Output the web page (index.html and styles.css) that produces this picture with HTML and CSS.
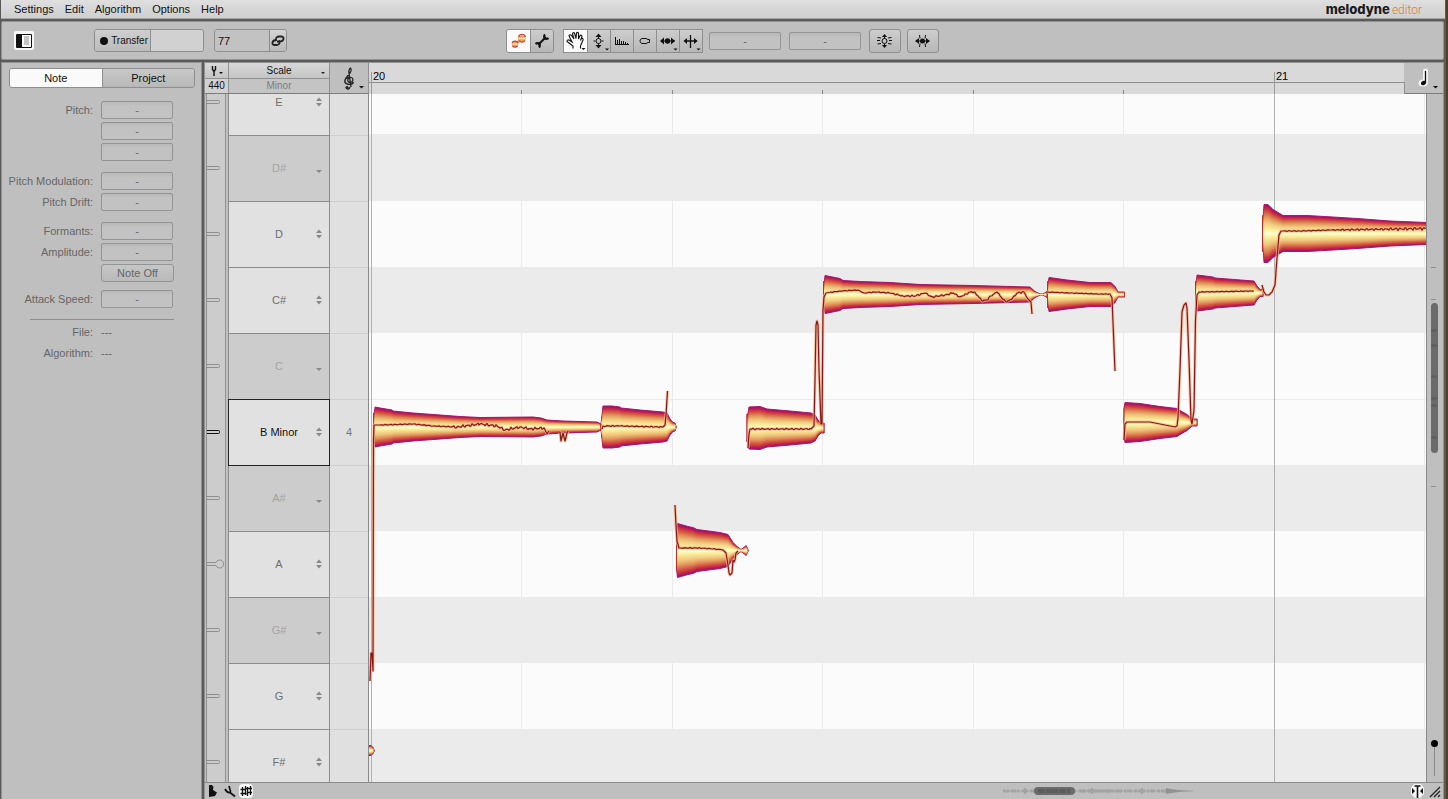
FILE: index.html
```html
<!DOCTYPE html>
<html lang="en">
<head>
<meta charset="utf-8">
<title>Melodyne editor</title>
<link rel="stylesheet" href="styles.css">
</head>
<body>
<div class="app">
  <header class="menubar">
    <nav class="menus">
      <button>Settings</button><button>Edit</button><button>Algorithm</button><button>Options</button><button>Help</button>
    </nav>
    <div class="logo"><b>melodyne</b><span>editor</span></div>
  </header>

  <section class="toolbar">
    <div class="tools-left">
      <button class="panel-toggle" aria-label="Toggle panel"><svg width="20" height="19"><rect width="20" height="19" rx="2" fill="#f6f6f6"/><path d="M2.500 3.500h15v13h-15z" fill="#fff" stroke="#111"/><path d="M3 4h5v12h-5z" fill="#111"/><path d="M10 5h5v9h-5z" fill="#c4c4c4"/></svg></button>
      <div class="transfer"><button><i class="dot"></i>Transfer</button><span></span></div>
      <div class="tempo"><input aria-label="Tempo" value="77"><button aria-label="Link tempo"><svg width="14" height="12" fill="none" stroke="#222" stroke-width="1.800"><path d="M5 6q-1-4 3-4.500h2q3 0 2.500 2.500T8 6.500H6"/><path d="M8 5.500q2 3.500-2 4.500H4q-3 0-2.500-2.500T5.500 5"/></svg></button></div>
    </div>
    <div class="tools-center">
      <div class="group round">
        <button class="on" aria-label="Notes"><svg width="18" height="18"><path d="M6 12l6-6" stroke="#e39a86" stroke-width="3"/><circle cx="5" cy="12" r="3.200" fill="#e9a257"/><circle cx="12" cy="6.500" r="3.600" fill="#e9a257"/><path d="M2 11a3.300 3.300 0 0 1 6 0M2.500 14a3.300 3.300 0 0 0 5 0M8.500 5a3.600 3.600 0 0 1 7 0M9 8.500a3.600 3.600 0 0 0 6 0" fill="none" stroke="#cf3d35" stroke-width="1.200"/><path d="M2.500 12h5M9 6.500h6" stroke="#ffeaa0" stroke-width="1.500"/></svg></button>
        <button aria-label="Adjust"><svg width="18" height="18" fill="none" stroke="#111"><path d="M5 13l8-8" stroke-width="2"/><path d="M12 2.500Q10.500 4 11.500 6.500 14 7.500 15.500 6M2.500 12Q4 10.500 6.500 11.500 7.500 14 6 15.500" stroke-width="2"/></svg></button>
      </div>
      <div class="group square">
        <button class="on" aria-label="Main tool"><svg width="21" height="21" fill="none" stroke="#111" stroke-width="1.100"><path d="M8 18.500V16L4 13 2 11.500Q2 9.500 4 10L7 12 5 8 4 5.500Q5 4 6.500 5.500L9 9 7.500 4Q8 2 9.500 3L11 8.500 11.500 3Q13 1.500 13.500 3.500V9L15 5.500Q16.500 4.500 17 6.500L15.500 10.500 16.500 8.500Q18.500 8 18 10L15.500 16v2.500"/><path d="M16.500 18h4l-2 2z" fill="#111" stroke="none"/></svg></button>
        <button aria-label="Pitch tool"><svg width="20" height="20"><path d="M9.500 4v3.500M9.500 12.500V16M4.500 10h2M12.500 10h2" stroke="#111"/><path d="M9.500 2.500l3 3.500h-6zM9.500 17.500l3-3.500h-6z" fill="#111"/><circle cx="9.500" cy="10" r="2.500" fill="none" stroke="#111"/><path d="M16 17.500h4l-2 2z" fill="#111"/></svg></button>
        <button aria-label="Formant tool"><svg width="20" height="20" stroke="#111" fill="none"><path d="M3.500 6v8M3 13.500h14M5.500 9v4M7.500 8v5M9.500 10v3M11.500 10v3M13.500 11v2M15.500 12v1"/></svg></button>
        <button aria-label="Amplitude tool"><svg width="20" height="20" stroke="#111" fill="none"><path d="M7 7.500h4l2 1h1.500v3H13l-2 1H7q-2-.5-2-2.500t2-2.500z"/></svg></button>
        <button aria-label="Timing tool"><svg width="20" height="20"><path d="M3 10h14" stroke="#111"/><path d="M2 10l4-3.500v7zM17 10l-4-3.500v7z" fill="#111"/><circle cx="9.500" cy="10" r="2.700" fill="#111"/><path d="M15.500 17.500h4l-2 2z" fill="#111"/></svg></button>
        <button aria-label="Note separation tool"><svg width="20" height="20"><path d="M9.500 4v13M4 10h12" stroke="#111" stroke-width="1.300"/><path d="M2.500 10L6 7v6zM16.500 10L13 7v6z" fill="#111"/><path d="M15.500 17.500h4l-2 2z" fill="#111"/></svg></button>
      </div>
      <input class="field wide" aria-label="Pitch value" value="-">
      <input class="field wide" aria-label="Cents value" value="-">
      <button class="macro" aria-label="Correct pitch"><svg width="20" height="18" fill="none" stroke="#111"><path d="M9.500 3v3.500M9.500 11.500V15M2.500 5.500l3.500.5M2 8.500h3M2.500 12l3.500-.5M16.500 5.500L13 6M14 8.500h3M16.500 12l-3.500-.5"/><circle cx="9.500" cy="9" r="2.500"/><path d="M9.500 2l2.500 3H7zM9.500 16l2.500-3H7z" fill="#111" stroke="none"/></svg></button>
      <button class="macro" aria-label="Quantize time"><svg width="20" height="18" fill="none" stroke="#111"><path d="M3 9h13M6.500 3l.5 3.500M6.500 15l.5-3.500M12.500 3l-.5 3.500M12.500 15l-.5-3.500"/><path d="M2 9l4-3v6zM17 9l-4-3v6z" fill="#111" stroke="none"/><circle cx="9.500" cy="9" r="2.500" fill="#111" stroke="none"/></svg></button>
    </div>
  </section>

  <main class="workspace">
    <aside class="inspector">
      <div class="tabs"><button class="on">Note</button><button>Project</button></div>
      <form class="props">
        <label for="p1">Pitch:</label><input id="p1" class="field" value="-">
        <input aria-label="Pitch cents" class="field lone" value="-">
        <input aria-label="Pitch frequency" class="field lone" value="-">
        <label class="gap" for="p2">Pitch Modulation:</label><input id="p2" class="field gap" value="-">
        <label for="p3">Pitch Drift:</label><input id="p3" class="field" value="-">
        <label class="gap" for="p4">Formants:</label><input id="p4" class="field gap" value="-">
        <label for="p5">Amplitude:</label><input id="p5" class="field" value="-">
        <button type="button" class="lone note-off">Note Off</button>
        <label class="gap-small" for="p6">Attack Speed:</label><input id="p6" class="field gap-small" value="-">
        <hr>
        <span class="key">File:</span><span>---</span>
        <span class="key">Algorithm:</span><span>---</span>
      </form>
    </aside>

    <section class="editor">
      <div class="editor-head">
        <div class="tuning">
          <button aria-label="Tuning"><svg width="14" height="12"><path d="M2.500 1v3.500L4 6.500 5.500 4.500V1M4 6v5" fill="none" stroke="#111" stroke-width="1.400"/><path d="M9 7h4l-2 2z" fill="#111"/></svg></button>
          <span>440</span>
        </div>
        <div class="scale">
          <button>Scale<i class="caret"></i></button>
          <span>Minor</span>
        </div>
        <button class="clef" aria-label="Clef"><svg width="30" height="28"><path d="M11.500 13c-2.500.5-2.500 4 .3 4.500s4.700-4 1.200-5-7 1.500-6 4.500 7.500 3.500 8.500 0M12 22q-1 3-3.500 1.500M13 22L11 8C10.500 4 12.500 2 13 4s-.5 4-3 6.500-4.500 5-2.500 8" fill="none" stroke="#222" stroke-width="1.300"/><circle cx="9" cy="22.500" r="1.600" fill="#222"/><path d="M21 21h5l-2.500 2.500z" fill="#111"/></svg></button>
        <svg class="ruler" width="100%" height="31"><path d="M0 19.500h2000" stroke="#909090"/><path d="M2.500 9v23M905.500 9v23" stroke="#999"/><path d="M152.500 27v4M303.500 27v4M453.500 27v4M604.500 27v4M754.500 27v4" stroke="#888"/><text x="4" y="17">20</text><text x="907" y="17">21</text></svg>
        <button class="snap" aria-label="Time grid"><svg width="39" height="31"><path d="M.5 19v12" stroke="#909090"/><path d="M21.500 8v11" stroke="#f6f6f6" stroke-width="5" stroke-linecap="round"/><ellipse cx="19" cy="20" rx="4.500" ry="3.500" fill="#f6f6f6"/><path d="M21.500 8v12" stroke="#111" stroke-width="1.300"/><ellipse cx="19.500" cy="20" rx="2.700" ry="2" fill="#111" transform="rotate(-20 19.500 20)"/><path d="M29 23h5l-2.500 2.500z" fill="#111"/></svg></button>
      </div>

      <div class="editor-body">
        <div class="keys" id="keys"></div>
        <svg class="canvas" id="canvas" width="100%" height="100%"></svg>
        <div class="vbar">
          <svg class="vscroll" width="16" height="400"><path d="M4 173.500h5M4 205.500h5M4 392.500h5" stroke="#8d8d8d"/><rect x="4" y="209" width="7" height="150" rx="3.500" fill="#6b6b6b"/><path d="M4 236.500h6M4 251.500h6M4 282.500h6M4 304.500h6M4 311.500h6M4 343.500h6" stroke="#5d5d5d" stroke-width="2"/></svg>
          <input class="vzoom" type="range" aria-label="Vertical zoom" min="0" max="100" value="0">
        </div>
      </div>

      <footer class="editor-foot">
        <svg width="60" height="16"><path d="M4 2h3l1.500 2-.5 3 4 2.500L10 13l-6 1z" fill="#111"/><path d="M20 6q2 4 5 3.500l5 4M24 3l1 3.500q1 1.500 0 3" fill="none" stroke="#111" stroke-width="1.700"/><rect x="34" y="1" width="14" height="14" rx="4" fill="#f6f6f6"/><path d="M37.500 4v9M40.500 3v9M42.500 4v9M45.500 3v9M35.500 6.500h5M41 5.500h6M35.500 10.500h6M42 9.500h5" stroke="#111" stroke-width="1.300" fill="none"/></svg>
        <svg class="overview" width="200" height="14"><g stroke="#a3a3a3"><path d="M2 7h108" stroke-width="3" stroke-dasharray="3 1 2 2 5 1 2 3"/><path d="M2 7h190"/><path d="M80 7h88" stroke-width="3" stroke-dasharray="5 2 3 1 7 2 2 1"/><path d="M24 4v6M91 4v6M141 4v6" stroke-width="2"/></g><path d="M165 4q8 2 26 3-18 1-26 3z" fill="#929292"/><rect x="33" y="3" width="41" height="8" rx="4" fill="#6b6b6b"/><path d="M37 7h32" stroke="#5c5c5c" stroke-width="4" stroke-dasharray="7 1 12 1"/></svg>
        <svg width="34" height="16"><path d="M2 5l3-4h7l3 4v6l-4 4H6l-4-4z" fill="#f6f6f6"/><path d="M8.500 3v12M5.500 3h6" stroke="#111" stroke-width="1.600"/><path d="M3 5l3 3-3 3zM14 5l-3 3 3 3z" fill="#111"/><path d="M21 14L31 4M25 14l6-6M29 14l2-2" stroke="#222" stroke-width="1.300"/></svg>
      </footer>
    </section>
  </main>
</div>
<script src="script.js"></script>
</body>
</html>
```

FILE: styles.css
```css
* { box-sizing: border-box; }
body {
  margin: 0;
  font: 11px/14px "Liberation Sans", Arial, sans-serif;
  color: #111;
  background: #4e4024;
}
button, input { font: inherit; color: inherit; margin: 0; padding: 0; border: 0; background: none; border-radius: 0; }
svg { display: block; }
.app {
  height: 100vh;
  margin-right: 2px;
  padding: 0 2px 0 1px;
  display: flex;
  flex-direction: column;
  background: #5a5a5a;
}

.menubar {
  flex: none;
  height: 19px;
  margin-right: -1px;
  padding: 0 23px 0 13px;
  display: flex;
  justify-content: space-between;
  align-items: center;
  background: linear-gradient(#dfdfdf, #cfcfcf);
  border-bottom: 1px solid #a5a5a5;
}
.menus { display: flex; gap: 11px; }
.logo { display: flex; align-items: baseline; gap: 2px; font-family: Inter, sans-serif; font-size: 12px; }
.logo b { font-size: 13px; font-weight: 800; color: #1c1c1c; }
.logo span { font-family: Roboto, sans-serif; font-weight: 300; color: #e07a35; }

.toolbar {
  flex: none;
  height: 39px;
  margin: 2px 0;
  padding: 0 12px;
  display: grid;
  grid-template-columns: 1fr auto 1fr;
  align-items: center;
  background: #bfbfbf;
  border: 1px solid #929292;
  border-radius: 2px;
}
.tools-left, .tools-center, .group { display: flex; align-items: center; }
.panel-toggle { margin-right: 60px; }
.transfer, .tempo {
  display: flex;
  height: 23px;
  border: 1px solid #8e8e8e;
  border-radius: 3px;
  overflow: hidden;
}
.transfer { width: 110px; margin-right: 10px; }
.transfer button { width: 56px; display: flex; align-items: center; justify-content: flex-end; gap: 3px; padding-right: 2px; background: linear-gradient(#cfcfcf, #bbb); border-right: 1px solid #8e8e8e; font-size: 10px; }
.transfer span { flex: 1; background: #d1d1d1; }
.dot { width: 8px; height: 8px; border-radius: 50%; background: #111; }
.tempo { width: 73px; }
.tempo input { flex: 1; min-width: 0; padding-left: 3px; background: #c2c2c2; }
.tempo button { width: 17px; display: grid; place-items: center; background: linear-gradient(#d5d5d5, #b9b9b9); border-left: 1px solid #8e8e8e; }
.group { height: 24px; border: 1px solid #8e8e8e; }
.group button { width: 23px; height: 22px; display: grid; place-items: center; background: linear-gradient(#cdcdcd, #b7b7b7); }
.group button + button { border-left: 1px solid #8e8e8e; }
.group .on { background: #fafafa; }
.round { border-radius: 3px; overflow: hidden; margin-right: 9px; }
.square { margin-right: 6px; }
.field {
  width: 72px;
  height: 18px;
  text-align: center;
  color: #666;
  background: linear-gradient(#b8b8b8, #c2c2c2 4px);
  border: 1px solid #949494;
  border-radius: 2px;
}
.wide { margin-right: 8px; }
.macro {
  width: 32px;
  height: 24px;
  display: grid;
  place-items: center;
  background: linear-gradient(#cdcdcd, #b7b7b7);
  border: 1px solid #8e8e8e;
  border-radius: 3px;
}
.macro + .macro { margin-left: 6px; }

.workspace { flex: 1; min-height: 0; display: flex; gap: 2px; }
.inspector { flex: none; width: 201px; padding: 5px 6px 5px 7px; background: #bfbfbf; border: 1px solid #929292; border-bottom: 0; }
.tabs { display: flex; height: 20px; border: 1px solid #8e8e8e; border-radius: 3px; overflow: hidden; }
.tabs button { flex: 1; background: linear-gradient(#c8c8c8, #b8b8b8); }
.tabs button + button { border-left: 1px solid #8e8e8e; }
.tabs .on { background: #fafafa; }
.props {
  margin-top: 13px;
  display: grid;
  grid-template-columns: 84px 73px;
  column-gap: 8px;
  row-gap: 3px;
  align-items: center;
  color: #666;
}
.props label, .key { text-align: right; white-space: nowrap; justify-self: end; }
.props span { line-height: 18px; }
.lone { grid-column: 2; }
.gap { margin-top: 8px; }
.gap-small { margin-top: 4px; }
.note-off { height: 18px; border: 1px solid #949494; border-radius: 3px; background: linear-gradient(#c6c6c6, #b9b9b9); }
.note-off + .gap-small, .note-off + .gap-small + .gap-small { margin-top: 5px; }
.props hr { grid-column: 1 / 3; justify-self: end; width: 144px; margin: 8px 0 0; border: 0; border-top: 1px solid #8e8e8e; }

.editor { flex: 1; min-width: 0; display: flex; flex-direction: column; background: #bfbfbf; border: 1px solid #929292; border-bottom: 0; }
.editor-head { flex: none; height: 31px; display: flex; border-bottom: 1px solid #7d7d7d; }
.tuning, .scale { display: flex; flex-direction: column; border-right: 1px solid #909090; text-align: center; font-size: 10px; }
.tuning { width: 24px; }
.scale { width: 101px; }
.tuning button, .scale button {
  height: 16px;
  display: grid;
  place-items: center;
  position: relative;
  background: linear-gradient(#d8d8d8, #c4c4c4);
  border-bottom: 1px solid #909090;
}
.tuning span { background: #d1d1d1; flex: 1; }
.scale span { color: #7d7d7d; background: #c4c4c4; flex: 1; }
.caret { position: absolute; right: 4px; bottom: 4px; border: 2px solid transparent; border-top-color: #222; border-bottom: 0; }
.clef { width: 38px; padding: 2px 0 0 8px; }
.ruler { flex: 1; min-width: 0; background: #d9d9d9; border-left: 1px solid #909090; }
.ruler text { font-size: 11px; }
.snap { width: 39px; }

.editor-body { flex: 1; min-height: 0; display: flex; overflow: hidden; }
.keys { flex: none; width: 164px; overflow: hidden; border-right: 1px solid #8a8a8a; }
.key-row { height: 66px; display: grid; grid-template-columns: 23px 102px 1fr; }
.key-row:first-child { margin-top: -24px; }
.mark { width: 20px; margin-left: 1px; padding-bottom: 2px; display: grid; align-items: center; background: #ccc; border: solid #929292; border-width: 0 1px; color: #8e8e8e; }
.pitch {
  position: relative;
  padding-bottom: 2px;
  text-align: center;
  color: #6e6e6e;
  background: #e1e1e1;
  border: solid #8c8c8c;
  border-width: 0 1px 1px;
}
.pitch.off { color: #a3a3a3; background: #ccc; }
.pitch.root { color: #111; border-color: #222; box-shadow: 0 -1px 0 #222; }
.root-mark { color: #111; }
.pitch svg { position: absolute; right: 6px; top: 26px; fill: #888; }
.octave { display: grid; place-items: center; padding-bottom: 1px; color: #777; background: #e0e0e0; border-bottom: 1px solid #cfcfcf; }
.canvas { flex: 1; min-width: 0; background: #fbfbfb; }
.vbar { flex: none; width: 17px; display: flex; flex-direction: column; justify-content: space-between; align-items: center; border-left: 1px solid #8a8a8a; }
.vzoom { appearance: none; writing-mode: vertical-lr; width: 9px; height: 36px; margin: 0 1px 6px 0; background: linear-gradient(#888, #888) center / 1px 100% no-repeat; }
.vzoom::-webkit-slider-thumb { appearance: none; width: 7px; height: 7px; border-radius: 50%; background: #000; }

.editor-foot { flex: none; height: 17px; display: flex; align-items: center; border-top: 1px solid #8a8a8a; }
.overview { margin-left: auto; margin-right: 208px; }
```

FILE: script.js
```js
const NS = "http://www.w3.org/2000/svg";
const el = (parent, tag, attrs) => {
  const n = document.createElementNS(NS, tag);
  for (const k in attrs) n.setAttribute(k, attrs[k]);
  parent.appendChild(n);
  return n;
};

/* Key column */
const keys = ["E", "D#", "D", "C#", "C", "B Minor", "A#", "A", "G#", "G", "F#"];
const off = ["D#", "C", "A#", "G#"];
document.getElementById("keys").innerHTML = keys.map(k => {
  const root = k === "B Minor";
  const shape = k === "A"
    ? '<path d="M0 4.500h9a4 4 0 1 1 0 3H0"/>'
    : '<path d="M0 4.500h11.500q1 0 1 1v1q0 1-1 1H0"/>';
  const arrows = off.includes(k)
    ? '<path d="M1 8h6l-3 3z"/>'
    : '<path d="M1 5h6L4 1.500zM1 7h6l-3 3.500z"/>';
  return `<div class="key-row"><div class="mark ${root ? "root-mark" : ""}"><svg width="18" height="12" fill="none" stroke="currentColor">${shape}</svg></div>` +
    `<button class="pitch ${off.includes(k) ? "off" : ""} ${root ? "root" : ""}">${k}<svg width="8" height="12">${arrows}</svg></button>` +
    `<div class="octave">${root ? "4" : ""}</div></div>`;
}).join("");

/* Canvas: song coordinates are shifted so that the view starts at (369, 94) */
const svg = document.getElementById("canvas");
[[40, 67], [173, 66], [371, 66], [503, 66], [635, 66]].forEach(([y, h]) =>
  el(svg, "rect", { x: 0, y, width: "100%", height: h, fill: "#ebebeb" }));
const g = el(svg, "g", { transform: "translate(-369 -94)" });
el(g, "path", { d: "M521.5 94V782M672.5 94V782M822.5 94V782M973.5 94V782M1123.5 94V782M1424.5 94V782M369 399.500H1426", stroke: "#ebebeb" });
el(g, "path", { d: "M371.5 94V2000M1274.5 94V2000", stroke: "#b0b0b0" });

/* Notes: centre line and [x, half height] outline */
const notes = [
  [427, [[373.5,14],[374.5,14],[375,20],[380,19],[392,17],[393,16],[413,14],[440,12],[460,10.5],[480,9.5],[533,10],[541,9],[547,7],[563,6],[597,5],[601,3]]],
  [427, [[601,3],[602,12],[603,21],[612,21],[620,20],[621,19],[640,17],[663,15],[667,14],[670,8],[673,4.5],[675,4],[676,1]]],
  [428, [[747,14],[748,14],[749,21],[760,21.5],[767,19],[790,17],[811,15],[815,13],[818,8],[821,5],[824,5]]],
  [550.5, [[676.5,18],[677.5,27],[688,24],[693,23],[697,21],[720,18],[728,16],[733,8],[737,4],[741,1],[744,3],[746,5],[748,1]]],
  [294.5, [[823.5,13],[824.5,13],[825,19],[840,16],[843,14],[860,13],[890,12],[920,10],[973,9],[1030,7.5],[1035,3],[1040,.5],[1043,.5],[1047,3]]],
  [294.5, [[1047.5,13],[1048.5,13],[1049,17],[1067,14.5],[1090,12],[1111,12],[1115,8],[1118,2.5],[1124.5,2.5]]],
  [422.5, [[1124,14],[1125,20],[1140,19],[1160,16],[1177,14],[1180,12],[1187,8],[1192,3.5],[1197,3.5]]],
  [293, [[1195.5,12],[1196.5,12],[1197,18],[1213,16],[1215,15],[1247,12.5],[1254,12],[1257,7],[1260,3.5],[1263,3.5]]],
  [233.5, [[1262.5,18],[1263.5,18],[1264,29],[1268,29],[1273,24],[1278,21],[1283,18],[1307,18],[1333,16.5],[1357,15],[1390,12.5],[1427,11]]],
  [750.5, [[368,5],[371,5],[373,3],[374,1]]]
];
const stops = [[0,255,255,220],[0.15,252,242,160],[0.4,240,200,125],[0.6,224,145,90],[0.77,211,82,65],[0.88,200,45,62],[0.94,178,25,95],[1,158,16,125]];
const shade = t => {
  let i = 1;
  while (i < stops.length - 1 && t > stops[i][0]) i++;
  const a = stops[i - 1], b = stops[i], u = (t - a[0]) / (b[0] - a[0]);
  return `rgb(${[1, 2, 3].map(k => Math.round(a[k] + (b[k] - a[k]) * u))})`;
};
const STEPS = 24;
notes.forEach(([c, pts]) => {
  for (let i = STEPS; i > 0; i--) {
    const f = i / STEPS;
    const top = pts.map(([x, h]) => `${x},${c - h * f}`);
    const bottom = pts.map(([x, h]) => `${x},${c + h * f}`).reverse();
    const a = { points: top.concat(bottom).join(" "), fill: shade(f) };
    if (i === STEPS) { a.stroke = "#a5186a"; a["stroke-width"] = 1; }
    el(g, "polygon", a);
  }
  const [x0, h0] = pts[0], [x1, h1] = pts[pts.length - 1];
  const d = `M${x0} ${c - h0}V${c + h0}M${x1} ${c - h1}V${c + h1}`;
  el(g, "path", { d, stroke: "#c02c28", "stroke-width": 1 });
});

/* Pitch curves: points, then wobble ranges [from, to, amplitude] */
const curves = [
  [[[370,681],[371,653],[372,653],[373,671],[373.5,440],[374,425],[380,425],[413,424],[433,426],[457,427],[480,424],[497,426],[505,430],[520,427],[530,429],[544,428],[547,434],[549,431]], [[380,450,.4],[450,546,1.2]]],
  [[[558,432],[560,432],[561,441],[563,433],[565,441],[567,433],[568,431]], []],
  [[[602,429],[603,426],[620,426],[663,427],[665,425],[666,415],[667.5,391]], [[605,662,.5]]],
  [[[675,505],[676,525],[677,541],[679,548],[700,548],[715,549],[723,550],[726,553],[728,565],[729,573],[730,575],[732,573],[733,560],[734,562],[735,560],[736,553],[738,551]], [[682,720,.4]]],
  [[[748,448],[749,434],[750,429],[811,429],[814,426],[815,380],[816,325],[817,321],[818,325],[819,370],[821,424],[822,424],[823,310],[824,297],[826,293],[840,291],[858,290],[864,293],[876,292],[890,293],[903,296],[915,296],[925,293],[932,297],[945,295],[953,293],[960,297],[966,294],[970,292],[974,292],[978,296],[982,301],[987,300],[991,296],[997,292],[1001,297],[1006,302],[1012,299],[1017,293],[1024,292],[1028,299],[1031,302],[1032,314]], [[752,810,.6],[830,895,.4],[895,1028,.8]]],
  [[[1047,292],[1070,293],[1100,294],[1110,294],[1112,298],[1115,371]], [[1050,1110,.3]]],
  [[[1124,440],[1125,424],[1127,422],[1150,422],[1160,424],[1175,427],[1177,426],[1178,418],[1180,370],[1182,312],[1184,305],[1186,303],[1187,308],[1189,360],[1191,420],[1192,424],[1194,410],[1195.5,320],[1197,295],[1199,292],[1254,291]], [[1200,1252,.3]]],
  [[[1262,285],[1264,292],[1266,295],[1269,295],[1272,292],[1275,285],[1277,258],[1279,235],[1281,231],[1300,231],[1330,230],[1427,228.5]], [[1284,1340,.4],[1340,1390,.8],[1390,1426,1.3]]]
];
const trace = ([pts, ranges]) => {
  const out = [];
  pts.forEach((p, i) => {
    out.push(p);
    const q = pts[i + 1];
    if (!q) return;
    for (let x = p[0] + 1; x < q[0]; x += 1) {
      const r = ranges.find(w => x >= w[0] && x <= w[1]);
      if (!r) continue;
      const y = p[1] + (q[1] - p[1]) * (x - p[0]) / (q[0] - p[0]);
      out.push([x, y + r[2] * (Math.sin(x * 1.3) * .7 + Math.sin(x * 2.1) * .5)]);
    }
  });
  return out.join(" ");
};
curves.forEach(c => {
  const points = trace(c);
  el(g, "polyline", { points, fill: "none", stroke: "#f2b592", "stroke-width": 3, "stroke-opacity": .8, "stroke-linejoin": "round" });
  el(g, "polyline", { points, fill: "none", stroke: "#8a1512", "stroke-width": 1.2, "stroke-linejoin": "round" });
});
```
